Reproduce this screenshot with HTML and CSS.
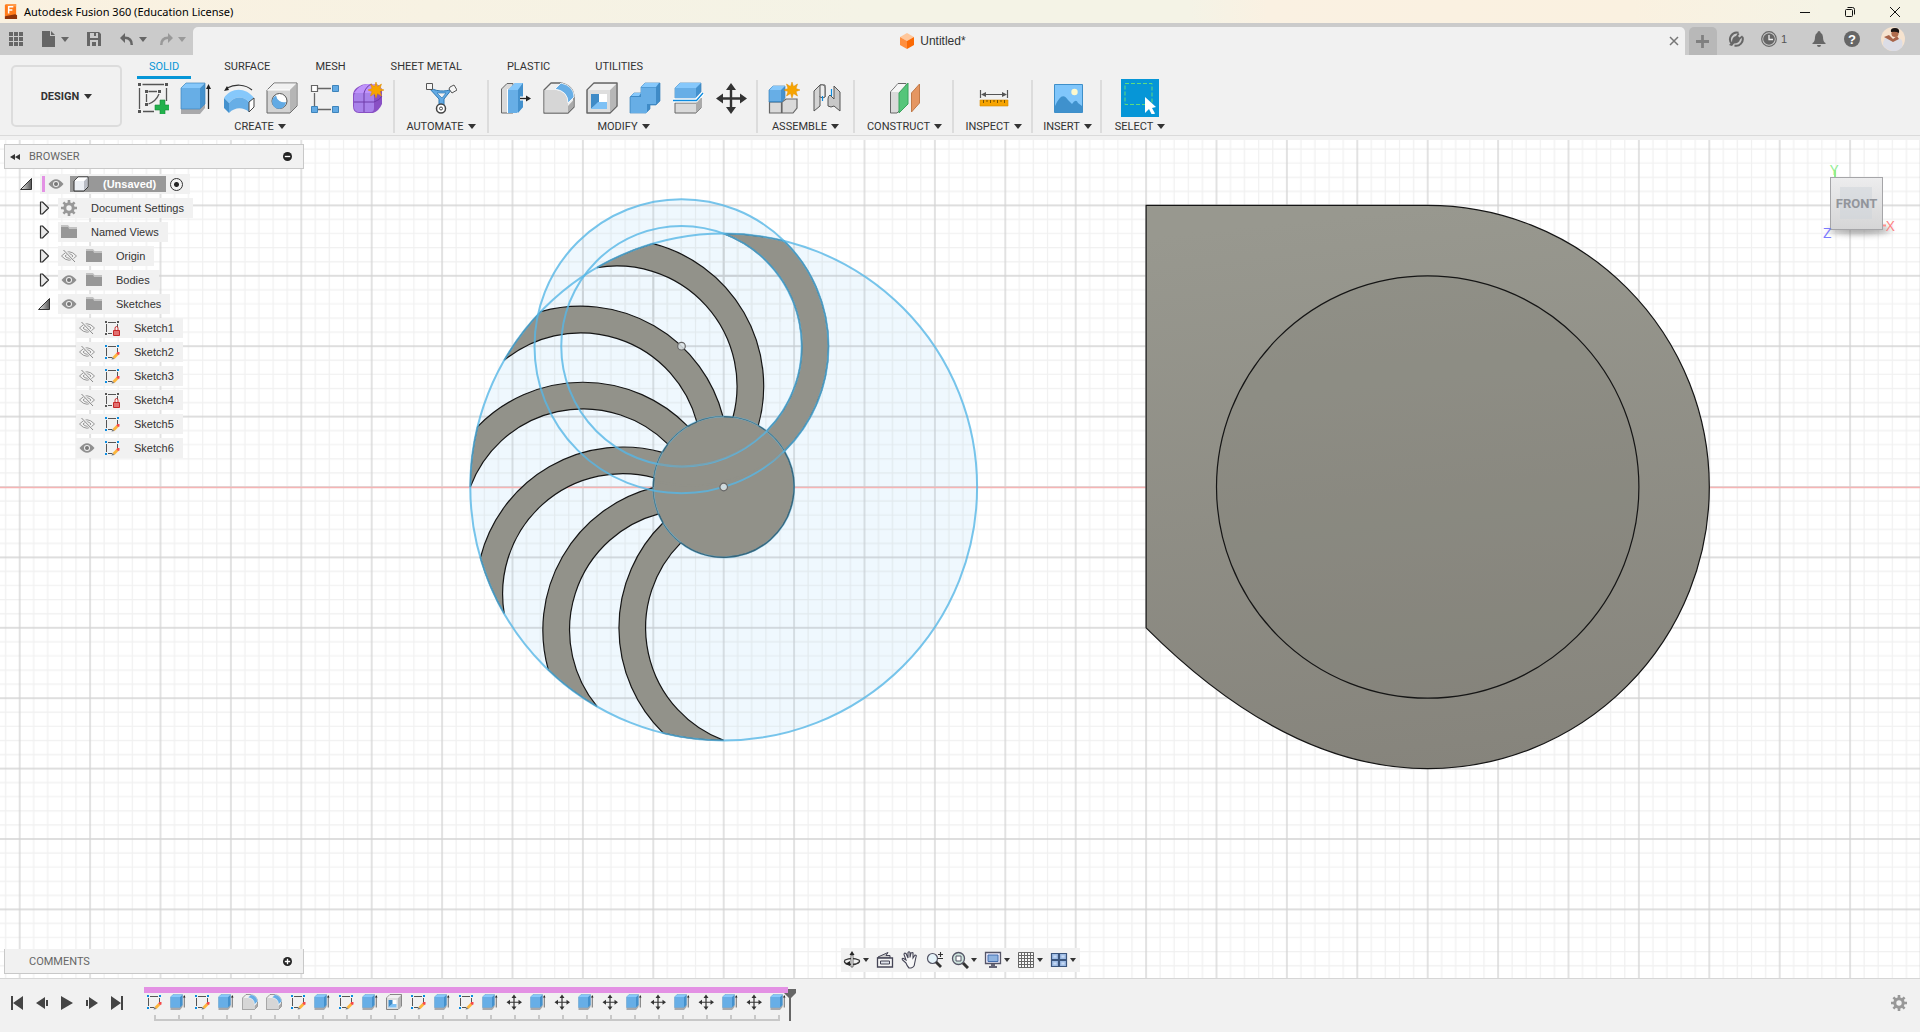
FILE: index.html
```
<!DOCTYPE html>
<html lang="en">
<head>
<meta charset="utf-8">
<title>Autodesk Fusion 360 (Education License)</title>
<link rel="stylesheet" href="styles.css">
</head>
<body>
<svg class="sprite" aria-hidden="true">
  <defs>
    <linearGradient id="metal" gradientUnits="userSpaceOnUse" x1="0" y1="-280" x2="60" y2="280"><stop offset="0" stop-color="#98988f"/><stop offset="1" stop-color="#86847c"/></linearGradient>
    <linearGradient id="arrowShade" x1="0" y1="0" x2="1" y2="0"><stop offset="0" stop-color="#eee"/><stop offset="1" stop-color="#555"/></linearGradient>
    <linearGradient id="cubeFace" x1="0" y1="0" x2="0" y2="1"><stop offset="0" stop-color="#ededee"/><stop offset="1" stop-color="#d5d5d6"/></linearGradient>
    <path id="blade" d="M0-253.4A253.4 253.4 0 0 1 60.4-246.1A147 147 0 0 1 60.6-35.8A70.4 70.4 0 0 0 42.9-55.8A120.25 120.25 0 0 0 0-253.4Z"/>
    <pattern id="grid" width="70.4" height="70.4" patternUnits="userSpaceOnUse" patternTransform="translate(19.7 65.4)">
      <path d="M14 0V70.4M28 0V70.4M42.200 0V70.4M56.300 0V70.4M0 14H70.4M0 28H70.4M0 42.200H70.4M0 56.300H70.4" stroke="#f0f0f0" stroke-width="1.200"/>
      <path d="M0 0V70.4M70.4 0V70.4M0 0H70.4M0 70.4H70.4" stroke="#d3d3d3" stroke-width="1.300"/>
    </pattern>
    <pattern id="gridOver" width="70.4" height="70.4" patternUnits="userSpaceOnUse">
      <path d="M14 0V70.4M28 0V70.4M42.200 0V70.4M56.300 0V70.4M0 14H70.4M0 28H70.4M0 42.200H70.4M0 56.300H70.4" stroke="#e2eaee" stroke-width="1.200"/>
      <path d="M0 0V70.4M70.4 0V70.4M0 0H70.4M0 70.4H70.4" stroke="#c7ced3" stroke-width="1.300"/>
    </pattern>
  </defs>

  <symbol id="i-newsketch" viewBox="0 0 32 32"><path d="M5.500 2.500H27M2.500 6V27M29.500 6V19M6 29.500H17M11.500 9.500H20M9.500 12V20M22 12C20 17 17 20 11.500 22" fill="none" stroke="#555" stroke-width="1.300"/><path d="M1 1h3v3H1zM28 1h3v3h-3zM1 28h3v3H1zM8 8h3v3H8zM21 8h3v3h-3zM8 21h3v3H8z" fill="#555"/><path d="M23 18h5v5h5v5h-5v5h-5v-5h-5v-5h5z" fill="#22b14c" stroke="#148c37" stroke-width=".6"/></symbol>
  <symbol id="i-extrude" viewBox="0 0 32 32"><path d="M1 27h19l5-6v5l-5 6H1z" fill="#a9a9ab"/><path d="M1 6 6 1h19l-5 5z" fill="#86c8fb"/><path d="M20 6l5-5v21l-5 5z" fill="#4491cd"/><path d="M1 6h19v21H1z" fill="#67aee6"/><path d="M1 6 6 1h19v21l-5 5H1z" fill="none" stroke="#3e84bb" stroke-width=".7"/><path d="M28.500 6V27" stroke="#222" stroke-width="1.300"/><path d="M26 7h5l-2.500-5z" fill="#222"/></symbol>
  <symbol id="i-revolve" viewBox="0 0 32 32"><path d="M1 16C8 5 23 5 31 16l-5 4C20 14 12 14 6 21z" fill="#86c8fb"/><path d="M6 21C12 14 20 14 26 20V30C20 25 12 25 6 31z" fill="#67aee6"/><path d="M1 16l5 5v10l-5-5z" fill="#4491cd"/><path d="M26 20l5-4v9l-5 5z" fill="#fff" stroke="#444"/><path d="M4 6C12 2 22 2 29 8" fill="none" stroke="#333" stroke-width="1.200"/><path d="M1 9l3-5 2 4z" fill="#222"/></symbol>
  <symbol id="i-hole" viewBox="0 0 32 32"><path d="M1 8 8 1h23v23l-7 7H1z" fill="#d3d3d3" stroke="#666" stroke-linejoin="round"/><path d="M1.500 8 8 1.500h22.500L24 8z" fill="#f1f1f1"/><path d="M24 8l6.500-6.500V24L24 30.500z" fill="#b5b5b5"/><path d="M1 8h23" stroke="#fff"/><circle cx="13.500" cy="19" r="7.500" fill="#fff" stroke="#555"/><path d="M10 13.500A7 7 0 1 0 20 20A8 8 0 0 1 10 13.500z" fill="#62aae4"/></symbol>
  <symbol id="i-pattern" viewBox="0 0 32 32"><path d="M9 6.500H22M5.500 11V24M9 27.500H22" stroke="#666" stroke-width="1.300"/><path d="M2.500 3.500h6v6h-6z" fill="#fff" stroke="#666" stroke-width="1.200"/><path d="M23.500 3.500h6v6h-6zM2.500 24.500h6v6h-6zM23.500 24.500h6v6h-6z" fill="#62aae4" stroke="#3e84bb"/></symbol>
  <symbol id="i-star" viewBox="0 0 16 16"><path d="M8 0l1.500 4.500L13.500 2 12 6.500 16 8l-4 1.500 1.500 4.500-4-2.500L8 16l-1.500-4.500-4 2.500L4 9.500 0 8l4-1.500L2.500 2l4 2.500z" fill="#f7a400" stroke="#df8c00" stroke-width=".5"/></symbol>
  <symbol id="i-form" viewBox="0 0 32 32"><path d="M6 5Q10 2 15 2h9q6 2 6 7v13q-3 7-9 9H7q-6 0-6-7V12q1-5 5-7z" fill="#8950c4"/><path d="M2 11q5-8 13-9h8q6 2 7 6-5 2-9 5z" fill="#bf93fb"/><path d="M4 11h15q3 0 3 4v11q0 4-3 4H6q-4-1-4-5V14q0-3 2-3z" fill="#a982ea"/><path d="M12 11V30M2 20H22q6-2 8-6M12 11Q14 4 20 2M22 14q6-3 8-6" fill="none" stroke="#6f3ba8"/><use href="#i-star" x="16" y="0" width="16" height="16"/></symbol>
  <symbol id="i-automate" viewBox="0 0 32 32"><path d="M4 4C8 10 22 10 27 7L19 17V26H14V17L4 6z" fill="#62aae4" stroke="#2f79b3"/><path d="M12 11h9l-4 5z" fill="#f1f1f1" stroke="#2f79b3" stroke-width=".7"/><path d="M1.500 1.500h6v6h-6zM25 5l4-2 3 5-5 3-3-4z" fill="#f5f5f5" stroke="#555"/><circle cx="16" cy="26.500" r="4.500" fill="#fff" stroke="#444" stroke-width="1.500"/><circle cx="16" cy="26.500" r="1.500" fill="#fff" stroke="#444"/></symbol>
  <symbol id="i-presspull" viewBox="0 0 32 32"><path d="M1.500 7 7 1.500h6V31H1.500z" fill="#dadada" stroke="#666"/><path d="M8 8l7-7h8v24l-6 6H8z" fill="#67aee6"/><path d="M8 8l7-7h8l-5 7z" fill="#86c8fb"/><path d="M18 8l5-7v24l-5 6z" fill="#4491cd"/><path d="M7.500 7V31" stroke="#fff"/><path d="M20 16.500H27" stroke="#fff" stroke-width="4"/><path d="M20 16.500H27" stroke="#222" stroke-width="1.400"/><path d="M26 13.500v6l5-3z" fill="#222"/></symbol>
  <symbol id="i-fillet" viewBox="0 0 32 32"><path d="M1 8 8 1h10Q31 4 31 16v9l-6 6H1z" fill="#efefef" stroke="#666" stroke-width="1.300" stroke-linejoin="round"/><path d="M25 24l5.500-6v7L25 30.500z" fill="#aaa"/><path d="M1.500 8H13Q25 10 25 20V30.500H1.500z" fill="#d6d6d6"/><path d="M12 7l6-6Q31 4 31 15l-6 6Q25 9 12 7z" fill="#67aee6" stroke="#fff" stroke-width=".8"/></symbol>
  <symbol id="i-shell" viewBox="0 0 32 32"><path d="M1 8 8 1h23v23l-7 7H1z" fill="#dedede" stroke="#666" stroke-width="1.500" stroke-linejoin="round"/><path d="M24 8l6-6V24L24 30z" fill="#b7b7b7"/><path d="M2 8 8 2h22L24 8z" fill="#f0f0f0"/><path d="M5 12h16v15H5z" fill="#fff"/><path d="M5 12h8v8l-8 7z" fill="#3f8bc7"/><path d="M12 20h9v7H5z" fill="#7ec1f5"/></symbol>
  <symbol id="i-combine" viewBox="0 0 32 32"><path d="M1 15l4-4h7V5l4-4h15v18l-4 4h-6v4l-4 4H1z" fill="#3f8bc7" stroke="#3e84bb" stroke-width=".7"/><path d="M1.500 15H12V5.500H27V22H18v9H1.500z" fill="#67aee6"/><path d="M2 14l3-3h7l-2 3zM12 5l4-4h14l-3 4z" fill="#86c8fb"/></symbol>
  <symbol id="i-split" viewBox="0 0 32 32"><path d="M3 6 8 1h21v10l-5 5H3z" fill="#4491cd" stroke="#3e84bb" stroke-width=".7"/><path d="M3 6h21v10H3z" fill="#67aee6"/><path d="M3 6 8 1h21l-5 5z" fill="#86c8fb"/><path d="M3 21h21l5-5v10l-5 5H3z" fill="#dadada" stroke="#666"/><path d="M24 21l5-5v10l-5 5z" fill="#aaa"/><path d="M1 18.500H24L31 11" fill="none" stroke="#fff" stroke-width="4"/><path d="M1 18.500H24.500L31 11" fill="none" stroke="#0d8ce0" stroke-width="1.300"/></symbol>
  <symbol id="i-move" viewBox="0 0 32 32"><path d="M16 5V28M5 16.500H28" stroke="#333" stroke-width="2.400"/><path d="M11 8h10L16 1zM11 25h10l-5 7zM8 11.500v10l-7-5zM25 11.500v10l7-5z" fill="#333"/></symbol>
  <symbol id="i-newcomp" viewBox="0 0 32 32"><path d="M1.500 20h12v11h-12zM14 20l4-3h11v9l-4 5H14z" fill="#dadada" stroke="#666" stroke-width="1.200"/><path d="M1 8 5 4h12v12l-3 4H1z" fill="#4491cd" stroke="#3e84bb" stroke-width=".7"/><path d="M1.500 8H13v11H1.500z" fill="#67aee6"/><path d="M1.500 8 5 4h12l-4 4z" fill="#86c8fb"/><use href="#i-star" x="16" y="0" width="16" height="16"/></symbol>
  <symbol id="i-joint" viewBox="0 0 32 32"><path d="M3 9 9 3h5v12l-5-1v10l-6 5z" fill="#d4d4d4" stroke="#555"/><path d="M9 3q5-1 5 3v9q-2 2-5 0V7z" fill="#eee" stroke="#555"/><path d="M29 10l-6-6v13l-4-4q-2 1-2 4v7q3 2 6 0l6 5z" fill="#c8c8c8" stroke="#555"/><path d="M11.500 14V19M20.500 7V14" stroke="#0d8ce0" stroke-width="1.200"/></symbol>
  <symbol id="i-plane" viewBox="0 0 32 32"><path d="M1.500 10 9 1.500h8V22L8 31H1.500z" fill="#dadada" stroke="#666"/><path d="M2 10 9 2h8l-7 8z" fill="#f6f6f6"/><path d="M10 11l9-10v21L10 31z" fill="#55c57a" stroke="#39a45c"/><path d="M22.500 11l8-9V21l-8 9z" fill="#e59662" stroke="#c27a49"/></symbol>
  <symbol id="i-measure" viewBox="0 0 32 32"><path d="M2.500 8V16M29.500 8V16M4 12.500H28" stroke="#555" stroke-width="1.200"/><path d="M3 12.500 8 10v5zM29 12.500 24 10v5z" fill="#555"/><path d="M2 18h28v6H2z" fill="#f7a400" stroke="#d68c00" stroke-width=".6"/><path d="M5.500 18v3M9 18v2M12.500 18v3M16 18v2M19.500 18v3M23 18v2M26.500 18v3" stroke="#7a5200"/></symbol>
  <symbol id="i-insert" viewBox="0 0 32 32"><path d="M2.500 2.500h28v28h-28z" fill="#80c6fb" stroke="#3e8fc9"/><path d="M3 24Q10 8 16 18l4 4q4-6 6-1l4 3v6H3z" fill="#3f91cd"/><circle cx="22.500" cy="10" r="3.200" fill="#fdf8cd"/></symbol>
  <symbol id="i-select" viewBox="0 0 32 32"><path d="M1 1.500h27v21H1z" fill="none" stroke="#5fdc7e" stroke-dasharray="4 2"/><path d="M21 15V31l4-4 3 6 3-1.500L28 26l4-1z" fill="#fff"/></symbol>

  <symbol id="t-sketch" viewBox="0 0 16 16"><path d="M4 2.500H12M2.500 4V12M13.500 4V8M4 13.500H8" stroke="#555"/><path d="M1 1h2v2H1zM13 1h2v2h-2zM1 13h2v2H1z" fill="#0d8ce0"/><path d="M8.500 13l4-4 2 2-4 4z" fill="#fdb53c"/><path d="M13 8h2.500v2.500L14 11l-1.500-1.500z" fill="#f5484a"/><path d="M7.500 15.500 8.500 13l2 2z" fill="#777"/></symbol>
  <symbol id="t-lock" viewBox="0 0 16 16"><path d="M4 2.500H12M2.500 4V12M13.500 4V7M4 13.500H8" stroke="#555"/><path d="M1 1h2v2H1zM13 1h2v2h-2zM1 13h2v2H1z" fill="#555"/><path d="M11 10.500V8.500q0-2 1.500-2t1.500 2v2" fill="none" stroke="#cf2a2a"/><path d="M9.500 10.500h6v5h-6z" fill="#e27070" stroke="#c62828"/></symbol>
  <symbol id="i-eye" viewBox="0 0 16 16"><path d="M.5 8Q8-1.500 15.500 8 8 17.500.5 8z" fill="#8f8f8f"/><circle cx="8" cy="8" r="3" fill="#f1f1f1"/><circle cx="8" cy="8" r="2" fill="#777"/></symbol>
  <symbol id="i-eyeoff" viewBox="0 0 16 16"><path d="M.5 8Q8-.5 15.500 8 8 16.500.5 8zM4 8q4-4.500 8 0-4 4.500-8 0z" fill="none" stroke="#999"/><path d="M3 2l11 12" stroke="#f1f1f1" stroke-width="2.500"/><path d="M2.500 2 14 14" stroke="#8a8a8a"/></symbol>
  <symbol id="i-folder" viewBox="0 0 16 16"><path d="M0 1h7l1.500 2H16v1H0z" fill="#c2c2c2"/><path d="M0 3h7l1 1.500H16V14H0z" fill="#979797"/></symbol>
  <symbol id="i-gear" viewBox="0 0 16 16"><path d="M8 0v16M0 8h16M2.400 2.400l11.200 11.200M13.600 2.400 2.400 13.600" stroke="#989898" stroke-width="2.600"/><circle cx="8" cy="8" r="4.200" fill="none" stroke="#989898" stroke-width="3"/><circle cx="8" cy="8" r="2.700" fill="#f1f1f1"/></symbol>
  <symbol id="i-body" viewBox="0 0 16 16"><path d="M1 5l4-4h10v10l-4 4H1z" fill="#eceff4" stroke="#333"/><path d="M11 5l3.500-3.500v9L11 14.500z" fill="#b9bcc4"/><path d="M1.500 5 5 1.500h9.500L11 5z" fill="#fff"/></symbol>
  <symbol id="i-open" viewBox="0 0 14 14"><path d="M1.500 12.500H12.500V1.500z" fill="url(#arrowShade)" stroke="#333"/></symbol>
  <symbol id="i-closed" viewBox="0 0 14 14"><path d="M3.500 1v12h2L11.500 7l-6-6z" fill="#e9e9e9" stroke="#333" stroke-width="1.200" stroke-linejoin="round"/></symbol>
</svg>

<div class="app">
  <header class="titlebar">
    <svg class="logo" viewBox="0 0 16 18" aria-hidden="true"><path d="M2 2 4 1h10v11l-1 2H2z" fill="#ff7a1a"/><path d="M2 2 4 1h10v3z" fill="#ff9a4a"/><path d="M2 14l11-2 2 1v4H2z" fill="#8f3208"/><path d="M6 11V4h5M6 7.500h4" stroke="#fff" stroke-width="1.600" fill="none"/></svg>
    <h1>Autodesk Fusion 360 (Education License)</h1>
    <div class="window-buttons">
      <button aria-label="Minimize"><svg viewBox="0 0 12 12"><path d="M1 6.500H11"/></svg></button>
      <button aria-label="Restore"><svg viewBox="0 0 12 12"><rect x="1.500" y="3.500" width="7" height="7" rx="1"/><path d="M3.500 1.500h5q2 0 2 2v5"/></svg></button>
      <button aria-label="Close"><svg viewBox="0 0 12 12"><path d="M1 1l10 10M11 1 1 11"/></svg></button>
    </div>
  </header>

  <div class="docbar">
    <div class="quick">
      <button class="q-grid" aria-label="Show data panel"><svg viewBox="0 0 14 14"><path d="M0 0h4v4H0zM5 0h4v4H5zM10 0h4v4h-4zM0 5h4v4H0zM5 5h4v4H5zM10 5h4v4h-4zM0 10h4v4H0zM5 10h4v4H5zM10 10h4v4h-4z"/></svg></button>
      <button class="q-file" aria-label="File"><svg viewBox="0 0 14 16"><path d="M0 0h8v5h5v11H0zM9 0l4 4H9z"/></svg><i class="caret"></i></button>
      <button class="q-save" aria-label="Save"><svg viewBox="0 0 14 14"><path fill-rule="evenodd" d="M0 0h12l2 2v12H0zM3 1v5h8V1H9v3H7V1zM3 8v6h2v-4h4v4h2V8z"/></svg></button>
      <button class="q-undo" aria-label="Undo"><svg viewBox="0 0 14 14"><path d="M5 1v3.500q8 0 8 8.500h-2.500q0-5.500-5.500-6v4L0 6z"/></svg><i class="caret"></i></button>
      <button class="q-redo" aria-label="Redo"><svg viewBox="0 0 14 14"><path d="M9 1v3.500q-8 0-8 8.500h2.500q0-5.500 5.500-6v4L14 6z"/></svg><i class="caret"></i></button>
    </div>
    <div class="doctab">
      <span class="docname"><svg viewBox="0 0 14 16" aria-hidden="true"><path d="M7 0l7 4-7 4-7-4z" fill="#ffc79b"/><path d="M0 4l7 4v8l-7-4z" fill="#ff8f3f"/><path d="M14 4 7 8v8l7-4z" fill="#fb6a05"/></svg>Untitled*</span>
      <button class="close" aria-label="Close document"><svg viewBox="0 0 10 10"><path d="M1 1l8 8M9 1 1 9" stroke="#777" stroke-width="1.500"/></svg></button>
    </div>
    <button class="newtab" aria-label="New design"><svg viewBox="0 0 14 14"><path d="M5.500 0h3v5.500H14v3H8.500V14h-3V8.500H0v-3h5.500z"/></svg></button>
    <div class="account">
      <button aria-label="Extensions"><svg viewBox="0 0 16 16"><path d="M3.500 12.500A6.800 6.800 0 0 1 10.500 1.700M14.500 6A6.800 6.800 0 0 1 6.500 14.600" fill="none" stroke="#666" stroke-width="2"/><path d="M1 14l3-3q0-5 4-6l2-3 1.500 1L10 5l1.500 1.500L14 4.500l1 1-3 3q-1 4-6 4l-2 2.500z" fill="#666"/></svg></button>
      <button class="jobs" aria-label="Job status"><svg viewBox="0 0 16 16"><circle cx="8" cy="8" r="7.300" fill="none" stroke="#666" stroke-width="1.200"/><circle cx="8" cy="8" r="5.800" fill="#666"/><path d="M8 4v4.500h4" fill="none" stroke="#eee" stroke-width="1.300"/></svg>1</button>
      <button class="bell" aria-label="Notifications"><svg viewBox="0 0 16 16"><path d="M8 0q1.500 0 1.500 1.500Q12 3 12 6q0 5 2.500 6v1h-13v-1Q4 11 4 6q0-3 2.500-4.500Q6.500 0 8 0zM6 14h4q0 2-2 2t-2-2z" fill="#666"/></svg></button>
      <button class="help" aria-label="Help">?</button>
      <button class="avatar" aria-label="Profile"><svg viewBox="0 0 24 24"><circle cx="12" cy="12" r="12" fill="#f6e3cf"/><path d="M2 18q0-8 6-8l4 3 5-2q6 1 4 9-4 5-10 4-6-1-9-6z" fill="#dcdde6"/><path d="M3 10l5-2 4 4 4-3 2 3-6 3z" fill="#a8644a"/><circle cx="14" cy="6.500" r="3.600" fill="#b06c4c"/><path d="M10 5q-1-4 4-4 5 0 4 5-3-2-8-1z" fill="#1a1514"/></svg></button>
    </div>
  </div>

  <div class="ribbon">
    <button class="workspace">DESIGN<i class="caret"></i></button>
    <div class="ribbon-main">
      <nav class="tabs">
        <a href="#solid" class="active" aria-current="page">SOLID</a><a href="#surface">SURFACE</a><a href="#mesh">MESH</a><a href="#sheet">SHEET METAL</a><a href="#plastic">PLASTIC</a><a href="#utilities">UTILITIES</a>
      </nav>
      <div class="groups">
        <section class="group g-create"><div class="tools">
          <button aria-label="Create sketch"><svg><use href="#i-newsketch"/></svg></button>
          <button aria-label="Extrude"><svg><use href="#i-extrude"/></svg></button>
          <button aria-label="Revolve"><svg><use href="#i-revolve"/></svg></button>
          <button aria-label="Hole"><svg><use href="#i-hole"/></svg></button>
          <button aria-label="Pattern"><svg><use href="#i-pattern"/></svg></button>
          <button aria-label="Create form"><svg><use href="#i-form"/></svg></button>
        </div><button class="label">CREATE<i class="caret"></i></button></section>
        <section class="group g-automate"><div class="tools">
          <button aria-label="Automated modeling"><svg><use href="#i-automate"/></svg></button>
        </div><button class="label">AUTOMATE<i class="caret"></i></button></section>
        <section class="group g-modify"><div class="tools">
          <button aria-label="Press pull"><svg><use href="#i-presspull"/></svg></button>
          <button aria-label="Fillet"><svg><use href="#i-fillet"/></svg></button>
          <button aria-label="Shell"><svg><use href="#i-shell"/></svg></button>
          <button aria-label="Combine"><svg><use href="#i-combine"/></svg></button>
          <button aria-label="Split body"><svg><use href="#i-split"/></svg></button>
          <button aria-label="Move"><svg><use href="#i-move"/></svg></button>
        </div><button class="label">MODIFY<i class="caret"></i></button></section>
        <section class="group g-assemble"><div class="tools">
          <button aria-label="New component"><svg><use href="#i-newcomp"/></svg></button>
          <button aria-label="Joint"><svg><use href="#i-joint"/></svg></button>
        </div><button class="label">ASSEMBLE<i class="caret"></i></button></section>
        <section class="group g-construct"><div class="tools">
          <button aria-label="Offset plane"><svg><use href="#i-plane"/></svg></button>
        </div><button class="label">CONSTRUCT<i class="caret"></i></button></section>
        <section class="group g-inspect"><div class="tools">
          <button aria-label="Measure"><svg><use href="#i-measure"/></svg></button>
        </div><button class="label">INSPECT<i class="caret"></i></button></section>
        <section class="group g-insert"><div class="tools">
          <button aria-label="Canvas"><svg><use href="#i-insert"/></svg></button>
        </div><button class="label">INSERT<i class="caret"></i></button></section>
        <section class="group g-select"><div class="tools">
          <button class="on" aria-label="Select" aria-pressed="true"><svg><use href="#i-select"/></svg></button>
        </div><button class="label">SELECT<i class="caret"></i></button></section>
      </div>
    </div>
  </div>

  <main class="viewport">
    <svg class="scene" role="img" aria-label="Front view of fan blades and housing">
      <rect width="100%" height="100%" fill="url(#grid)"/>
      <path d="M0 347.500H4000" stroke="#f6b4b4" stroke-width="1.400"/>
      <g transform="translate(723.700 347)">
        <circle r="253.400" fill="#eff8fe"/>
        <circle cx="-42.200" cy="-140.800" r="147" fill="#eff8fe"/>
        <circle r="253.400" fill="url(#gridOver)"/>
        <clipPath id="cap"><path d="M-254-300H110V-165H-254z"/></clipPath>
        <g clip-path="url(#cap)"><circle cx="-42.200" cy="-140.800" r="147" fill="url(#gridOver)"/></g>
        <path d="M-253 .500H-70M70 .500H253" stroke="#f6b4b4" stroke-width="1.400"/>
        <g fill="#92928a" stroke="#151515" stroke-width="1.200">
          <use href="#blade"/><use href="#blade" transform="rotate(-30)"/><use href="#blade" transform="rotate(-60)"/><use href="#blade" transform="rotate(-90)"/><use href="#blade" transform="rotate(-120)"/><use href="#blade" transform="rotate(-150)"/><use href="#blade" transform="rotate(-180)"/>
        </g>
        <circle r="70.400" fill="#919189"/>
        <path d="M60.600-35.800A70.400 70.400 0 0 1-42.900 55.800M-60.600 35.800A70.400 70.400 0 0 1-65 27M-70.400 0A70.400 70.400 0 0 1-69.700-9.700M-61-35.100A70.400 70.400 0 0 1-55.800-42.900M-35.800-60.600A70.400 70.400 0 0 1-27-65M0-70.400A70.400 70.400 0 0 1 9.700-69.700M35.100-61A70.400 70.400 0 0 1 42.900-55.800" fill="none" stroke="#151515" stroke-width="1.300"/>
        <g fill="none" stroke="#56b7e6" stroke-width="2" stroke-opacity=".8">
          <circle r="253.400"/><circle r="70.400" stroke-opacity=".5"/><circle cx="-42.200" cy="-140.800" r="147"/><circle cx="-42.200" cy="-140.800" r="120.250"/>
        </g>
        <g fill="none" stroke="#92928a" stroke-opacity=".4" stroke-width="2">
          <path d="M59-34A147 147 0 0 1-65-5M42-57A120 120 0 0 1-66-23"/>
        </g>
        <g fill="#dde4e6" fill-opacity=".85" stroke="#666" stroke-width="1.200"><circle r="3.800"/><circle cx="-42.200" cy="-140.800" r="3.800"/></g>
      </g>
      <g transform="translate(1427.700 347)" stroke="#151515" stroke-width="1.200">
        <path d="M-281.600-281.600H0A281.600 281.600 0 0 1 0 281.600Q-140.800 281.600-281.600 140.800z" fill="url(#metal)"/>
        <circle r="211.200" fill="#7c7a73" fill-opacity=".22"/>
      </g>
    </svg>

    <svg class="viewcube" viewBox="0 0 90 90" role="img" aria-label="View cube, front">
      <defs><filter id="soft" x="-20%" y="-100%" width="140%" height="300%"><feGaussianBlur stdDeviation="3"/></filter></defs>
      <ellipse cx="41" cy="70" rx="31" ry="4" fill="#777" opacity=".7" filter="url(#soft)"/>
      <path d="M16 10V18" stroke="#8fee8f" stroke-width="2"/>
      <rect x="11.500" y="17.500" width="52" height="52" fill="url(#cubeFace)" stroke="#a5a5a8"/>
      <rect x="21" y="27" width="32" height="32" fill="#cdd3da" opacity=".5"/>
      <path d="M64 65.500H67" stroke="#ff8f8f" stroke-width="2"/>
      <text x="37.500" y="48" text-anchor="middle" class="face">FRONT</text>
      <text x="11" y="15" class="ax-y">Y</text><text x="67" y="71" class="ax-x">X</text><text x="4" y="78" class="ax-z">Z</text>
    </svg>

    <aside class="browser">
      <div class="panel-head"><button class="collapse" aria-label="Collapse browser"><svg viewBox="0 0 10 6"><path d="M5 0v6L0 3zM10 0v6L5 3z" fill="#333"/></svg></button><span>BROWSER</span><button class="dot" aria-label="Hide browser"><svg viewBox="0 0 10 10"><circle cx="5" cy="5" r="5" fill="#222"/><path d="M2 5H8" stroke="#fff" stroke-width="1.500"/></svg></button></div>
      <ul class="tree">
        <li class="root"><svg class="tog"><use href="#i-open"/></svg><span class="node"><i class="bar"></i><svg><use href="#i-eye"/></svg><span class="sel"><svg><use href="#i-body"/></svg><b>(Unsaved)</b></span><input type="radio" name="active" checked aria-label="Activate (Unsaved)"></span></li>
        <li class="l1"><svg class="tog"><use href="#i-closed"/></svg><span class="node"><svg><use href="#i-gear"/></svg><span>Document Settings</span></span></li>
        <li class="l1"><svg class="tog"><use href="#i-closed"/></svg><span class="node"><svg><use href="#i-folder"/></svg><span>Named Views</span></span></li>
        <li class="l1"><svg class="tog"><use href="#i-closed"/></svg><span class="node"><svg><use href="#i-eyeoff"/></svg><svg><use href="#i-folder"/></svg><span>Origin</span></span></li>
        <li class="l1"><svg class="tog"><use href="#i-closed"/></svg><span class="node"><svg><use href="#i-eye"/></svg><svg><use href="#i-folder"/></svg><span>Bodies</span></span></li>
        <li class="l1"><svg class="tog"><use href="#i-open"/></svg><span class="node"><svg><use href="#i-eye"/></svg><svg><use href="#i-folder"/></svg><span>Sketches</span></span></li>
        <li class="l2"><span class="node"><svg><use href="#i-eyeoff"/></svg><svg><use href="#t-lock"/></svg><span>Sketch1</span></span></li>
        <li class="l2"><span class="node"><svg><use href="#i-eyeoff"/></svg><svg><use href="#t-sketch"/></svg><span>Sketch2</span></span></li>
        <li class="l2"><span class="node"><svg><use href="#i-eyeoff"/></svg><svg><use href="#t-sketch"/></svg><span>Sketch3</span></span></li>
        <li class="l2"><span class="node"><svg><use href="#i-eyeoff"/></svg><svg><use href="#t-lock"/></svg><span>Sketch4</span></span></li>
        <li class="l2"><span class="node"><svg><use href="#i-eyeoff"/></svg><svg><use href="#t-sketch"/></svg><span>Sketch5</span></span></li>
        <li class="l2"><span class="node"><svg><use href="#i-eye"/></svg><svg><use href="#t-sketch"/></svg><span>Sketch6</span></span></li>
      </ul>
    </aside>

    <div class="bottom">
      <div class="panel-head comments"><span>COMMENTS</span><button class="dot" aria-label="Show comments"><svg viewBox="0 0 10 10"><circle cx="5" cy="5" r="5" fill="#222"/><path d="M2 5H8M5 2V8" stroke="#fff" stroke-width="1.500"/></svg></button></div>
      <div class="navbar">
        <button aria-label="Orbit"><svg viewBox="0 0 18 18"><path d="M5 13q-5-1-3-4 7-3 14 0 2 2-3 4-4 1-8 0" fill="none" stroke="#333" stroke-width="1.300"/><path d="M6.500 4 9 0l2.500 4zM2 13l5-3v5z" fill="#222"/><path d="M8 4h2v12H8z" fill="#fff" stroke="#333" stroke-width=".7"/></svg><i class="caret"></i></button>
        <button aria-label="Look at"><svg viewBox="0 0 18 18"><path d="M2 6 12 1.500l-2 3h4V7H2z" fill="#ccc" stroke="#445"/><path d="M1.500 7h15v9h-15z" fill="#f4f4f4" stroke="#445" stroke-width="1.300"/><path d="M4.500 10h9v3h-9z" fill="#dfe3ea" stroke="#445"/></svg></button>
        <button aria-label="Pan"><svg viewBox="0 0 18 18"><path d="M5 12 1.500 9q-1-2 1-1.500l2.500 1.500L3 3.500q0-2 2-1l2 4.500V1.500q1-1.500 2 0V6.500l1-4.500q2-1 2 0v5l2-3q2 0 1 2l-1.500 7q0 3-3.500 4H8q-2-2-3-5z" fill="#f8f8f8" stroke="#445" stroke-width="1.100"/></svg></button>
        <button aria-label="Zoom"><svg viewBox="0 0 18 18"><circle cx="6.500" cy="7.500" r="5" fill="#e6f4fa" stroke="#556" stroke-width="1.200"/><path d="M10 11l5 5" stroke="#333" stroke-width="2.800"/><path d="M12 3.500h5M14.500 1v5M12 7.500h5" stroke="#333" stroke-width="1.100"/></svg></button>
        <button aria-label="Fit"><svg viewBox="0 0 18 18"><circle cx="7.500" cy="7.500" r="6" fill="#cfe5de" stroke="#556" stroke-width="1.300"/><path d="M5 5h5v5H5z" fill="#fff" stroke="#556"/><path d="M12 12l5 5" stroke="#333" stroke-width="3"/></svg><i class="caret"></i></button>
        <button aria-label="Display settings"><svg viewBox="0 0 18 18"><path d="M1.500 1.500h15v11h-15z" fill="#eef" stroke="#556" stroke-width="1.300"/><path d="M4 4h10v6.500H4z" fill="#8fb3e0" stroke="#456fae"/><path d="M7 13h4v2h2v2H5v-2h2z" fill="#667"/></svg><i class="caret"></i></button>
        <button aria-label="Grid and snaps"><svg viewBox="0 0 18 18"><path d="M1.500 1.500h15v15h-15zM4.500 1v16M7.500 1v16M10.500 1v16M13.500 1v16M1 4.500h16M1 7.500h16M1 10.500h16M1 13.500h16" fill="#f6f6f6" stroke="#666"/></svg><i class="caret"></i></button>
        <button aria-label="Viewports"><svg viewBox="0 0 18 18"><path d="M1.500 2.500h7v6h-7zM9.500 2.500h7v6h-7zM1.500 9.500h7v6h-7zM9.500 9.500h7v6h-7z" fill="#9fbde6" stroke="#3b557c" stroke-width="1.200"/><path d="M3.500 4.500h3v2h-3zM11.500 4.500h3v2h-3zM3.500 11.500h3v2h-3zM11.500 11.500h3v2h-3z" fill="#c9dcf3"/></svg><i class="caret"></i></button>
      </div>
    </div>
  </main>

  <footer class="timeline">
    <div class="play">
      <button aria-label="Go to start"><svg viewBox="0 0 14 14"><path d="M1 0h2v14H1zM13 0v14L3 7z"/></svg></button>
      <button aria-label="Step back"><svg viewBox="0 0 14 14"><path d="M10 1v12L1 7zM11 4h2v6h-2z"/></svg></button>
      <button aria-label="Play"><svg viewBox="0 0 14 14"><path d="M1 0v14L13 7z"/></svg></button>
      <button aria-label="Step forward"><svg viewBox="0 0 14 14"><path d="M4 1v12l9-6zM1 4h2v6H1z"/></svg></button>
      <button aria-label="Go to end"><svg viewBox="0 0 14 14"><path d="M11 0h2v14h-2zM1 0v14l10-7z"/></svg></button>
    </div>
    <div class="track">
      <ol>
        <li><button aria-label="Sketch1"><svg><use href="#t-sketch"/></svg></button></li>
        <li><button aria-label="Extrude1"><svg><use href="#i-extrude"/></svg></button></li>
        <li><button aria-label="Sketch2"><svg><use href="#t-sketch"/></svg></button></li>
        <li><button aria-label="Extrude2"><svg><use href="#i-extrude"/></svg></button></li>
        <li><button aria-label="Fillet1"><svg><use href="#i-fillet"/></svg></button></li>
        <li><button aria-label="Fillet2"><svg><use href="#i-fillet"/></svg></button></li>
        <li><button aria-label="Sketch3"><svg><use href="#t-sketch"/></svg></button></li>
        <li><button aria-label="Extrude3"><svg><use href="#i-extrude"/></svg></button></li>
        <li><button aria-label="Sketch4"><svg><use href="#t-sketch"/></svg></button></li>
        <li><button aria-label="Extrude4"><svg><use href="#i-extrude"/></svg></button></li>
        <li><button aria-label="Shell1"><svg><use href="#i-shell"/></svg></button></li>
        <li><button aria-label="Sketch5"><svg><use href="#t-sketch"/></svg></button></li>
        <li><button aria-label="Extrude5"><svg><use href="#i-extrude"/></svg></button></li>
        <li><button aria-label="Sketch6"><svg><use href="#t-sketch"/></svg></button></li>
        <li><button aria-label="Extrude6"><svg><use href="#i-extrude"/></svg></button></li>
        <li><button aria-label="Move1"><svg><use href="#i-move"/></svg></button></li>
        <li><button aria-label="Extrude7"><svg><use href="#i-extrude"/></svg></button></li>
        <li><button aria-label="Move2"><svg><use href="#i-move"/></svg></button></li>
        <li><button aria-label="Extrude8"><svg><use href="#i-extrude"/></svg></button></li>
        <li><button aria-label="Move3"><svg><use href="#i-move"/></svg></button></li>
        <li><button aria-label="Extrude9"><svg><use href="#i-extrude"/></svg></button></li>
        <li><button aria-label="Move4"><svg><use href="#i-move"/></svg></button></li>
        <li><button aria-label="Extrude10"><svg><use href="#i-extrude"/></svg></button></li>
        <li><button aria-label="Move5"><svg><use href="#i-move"/></svg></button></li>
        <li><button aria-label="Extrude11"><svg><use href="#i-extrude"/></svg></button></li>
        <li><button aria-label="Move6"><svg><use href="#i-move"/></svg></button></li>
        <li><button aria-label="Extrude12"><svg><use href="#i-extrude"/></svg></button></li>
      </ol>
      <svg class="marker" viewBox="0 0 12 32" aria-hidden="true"><path d="M0 0h12v4L7 9v23H5V9L0 4z" fill="#666"/></svg>
    </div>
    <button class="settings" aria-label="Timeline settings"><svg><use href="#i-gear"/></svg></button>
  </footer>
</div>
</body>
</html>
```
FILE: styles.css
```
* { box-sizing: border-box; }
body { margin: 0; font: 11px "Liberation Sans", Arial, sans-serif; color: #333; }
button { border: 0; padding: 0; margin: 0; background: none; font: inherit; color: inherit; display: flex; align-items: center; }
svg { display: block; flex: none; }
ul, ol { list-style: none; margin: 0; padding: 0; }
.sprite { position: absolute; width: 0; height: 0; }

.app { display: flex; flex-direction: column; height: 100vh; background: #f1f1f1; }
.caret { border: 4px solid transparent; border-top: 5px solid currentColor; border-bottom: 0; }

.titlebar { display: flex; align-items: center; height: 23px; padding: 0 19px 0 3px; gap: 6px; background: linear-gradient(90deg, #faf1e0, #f4f3e6 45%, #f4f3e6 62%, #faf1e2 66%, #faf1e0 85%, #f5f3e5 95%); }
.titlebar h1 { margin: 0; flex: 1; font: 11px "Noto Sans", sans-serif; color: #000; }
.logo { width: 15px; height: 17px; }
.window-buttons { display: flex; gap: 33px; }
.window-buttons svg { width: 12px; height: 12px; fill: none; stroke: #111; stroke-width: 1; }

.docbar { display: flex; align-items: flex-end; height: 32px; padding-top: 4px; background: #cbcbcb; }
.quick { display: flex; align-items: center; width: 193px; height: 32px; padding-left: 9px; gap: 19px; color: #666; }
.quick svg { width: 14px; height: 14px; fill: currentColor; }
.q-file svg { height: 16px; }
.q-file, .q-undo, .q-redo { gap: 5px; }
.q-save { margin-left: -1px; }
.q-undo, .q-redo { margin-right: -7px; }
.q-redo { color: #999; }
.doctab { flex: 1; display: flex; align-items: center; height: 28px; padding: 0 6px 0 4px; border-radius: 5px 5px 0 0; background: #f1f1f1; }
.docname { flex: 1; display: flex; justify-content: center; align-items: center; gap: 6px; font-size: 12px; }
.docname svg { width: 14px; height: 16px; }
.close svg { width: 10px; height: 10px; }
.newtab { justify-content: center; width: 28px; height: 28px; margin: 0 11px 0 4px; border-radius: 5px 5px 0 0; background: #b8b8b8; }
.newtab svg { width: 13px; height: 13px; fill: #808080; }
.account { display: flex; align-items: center; height: 32px; padding-right: 15px; color: #555; }
.account svg { width: 16px; height: 16px; }
.jobs { gap: 4px; margin-left: 17px; }
.bell { margin-left: 24px; }
.help { justify-content: center; width: 16px; height: 16px; margin-left: 17px; border-radius: 50%; background: #666; color: #fff; font-weight: bold; font-size: 13px; }
.avatar { margin-left: 21px; }
.account .avatar svg { width: 24px; height: 24px; }

.ribbon { display: flex; gap: 5px; height: 85px; padding: 0 0 3px 11px; border-bottom: 4px solid #f1f1f1; box-shadow: inset 0 -1px #dadada; font-family: Roboto, sans-serif; }
.workspace { justify-content: center; gap: 5px; width: 111px; height: 62px; margin-top: 10px; border: 2px solid #dcdcdc; border-radius: 5px; font-weight: bold; }
.tabs { display: flex; gap: 21px; padding: 0 10px; height: 24px; }
.tabs a { padding: 5px 12px 0; line-height: 14px; color: #333; text-decoration: none; }
.tabs .active { color: #0696d7; border-bottom: 3px solid #0696d7; }
.groups { display: flex; padding-top: 1px; }
.group { display: flex; flex-direction: column; align-items: center; gap: 4px; height: 53px; border-right: 2px solid #dcdcdc; }
.tools { display: flex; gap: 11px; height: 36px; align-items: center; }
.tools button { justify-content: center; width: 32px; height: 32px; }
.tools svg { width: 32px; height: 32px; overflow: visible; }
.tools .on { width: 38px; height: 38px; background: #0696d7; }
.label { gap: 4px; line-height: 13px; white-space: nowrap; }
.g-create { width: 268px; }
.g-automate { width: 94px; }
.g-modify { width: 269px; padding-left: 2px; }
.g-assemble { width: 97px; }
.g-construct { width: 99px; padding-left: 2px; }
.g-inspect { width: 79px; padding-left: 2px; }
.g-insert { width: 69px; padding-left: 2px; }
.g-select { width: 76px; border: 0; }

.viewport { position: relative; flex: 1; display: flex; flex-direction: column; justify-content: space-between; min-height: 0; padding: 4px; background: #fff; overflow: hidden; }
.scene { position: absolute; inset: 0; width: 100%; height: 100%; }
.viewcube { position: absolute; right: 11px; top: 20px; width: 90px; height: 90px; font: 15px "Liberation Sans Narrow", "Open Sans", sans-serif; }
.face { font: bold 13px "Liberation Sans Narrow", Roboto, sans-serif; fill: #92959b; }
.ax-y { fill: #8fee8f; }
.ax-x { fill: #ff8080; }
.ax-z { fill: #7b7bff; }

.browser, .bottom { position: relative; }
.panel-head { display: flex; align-items: center; width: 300px; height: 25px; padding: 0 11px 0 5px; border: 1px solid #c8c8c8; background: #f1f1f1; font-family: Roboto, sans-serif; color: #666; }
.panel-head span { flex: 1; }
.collapse { width: 19px; }
.collapse svg { width: 10px; height: 6px; }
.dot svg { width: 9px; height: 9px; }
.tree { padding-top: 3px; }
.tree li { display: flex; align-items: center; height: 24px; gap: 7px; }
.tree svg { width: 16px; height: 16px; }
.tree .tog { width: 14px; height: 14px; }
.root { padding-left: 15px; }
.l1 { padding-left: 33px; }
.l2 { padding-left: 72px; }
.node { display: flex; align-items: center; gap: 9px; height: 20px; padding: 0 9px 0 3px; background: #f1f1f1; }
.node > span { margin-left: 5px; }
.root .node { gap: 3px; padding: 0 7px 0 2px; }
.bar { width: 3px; height: 16px; background: #e391e4; }
.root .node > .sel { display: flex; align-items: center; gap: 14px; height: 16px; margin-left: 3px; padding: 0 10px 0 3px; background: #989898; color: #fff; }
.root input { appearance: none; width: 13px; height: 13px; margin: 0 0 0 1px; border: 1px solid #333; border-radius: 50%; background: radial-gradient(#222 0 2px, #f1f1f1 3px); }

.bottom { display: grid; grid-template-columns: 1fr auto 1fr; align-items: end; }
.comments { padding-left: 24px; border-top: 0; }
.navbar { display: flex; align-items: center; gap: 7px; height: 24px; margin-bottom: 2px; padding: 0 4px 0 2px; background: #f1f1f1; }
.navbar button { gap: 2px; }
.navbar svg { width: 18px; height: 18px; }
.navbar .caret { border-width: 4px 3px 0; }

.timeline { display: flex; align-items: flex-start; height: 54px; padding: 8px 13px 0 10px; border-top: 1px solid #d6d6d6; }
.play { display: flex; gap: 11px; padding-top: 9px; }
.play svg { width: 14px; height: 14px; fill: #444; }
.track { flex: 1; display: flex; margin-left: 20px; }
.track ol { position: relative; display: flex; height: 34px; padding: 1px 0 0 2px; border-top: 6px solid #e391e4; }
.track ol::after { content: ""; position: absolute; left: 10px; right: 9px; bottom: 0; height: 2px; background: #c8c8c8; }
.track li { width: 24px; height: 27px; display: flex; flex-direction: column; justify-content: space-between; }
.track li:last-child { width: 18px; }
.track li::after { content: ""; width: 2px; height: 6px; margin-left: 8px; background: #c8c8c8; }
.track svg { width: 16px; height: 16px; }
.track .marker { width: 12px; height: 32px; margin: 2px 0 0 -4px; }
.settings { padding-top: 8px; }
.settings svg { width: 16px; height: 16px; }
```
